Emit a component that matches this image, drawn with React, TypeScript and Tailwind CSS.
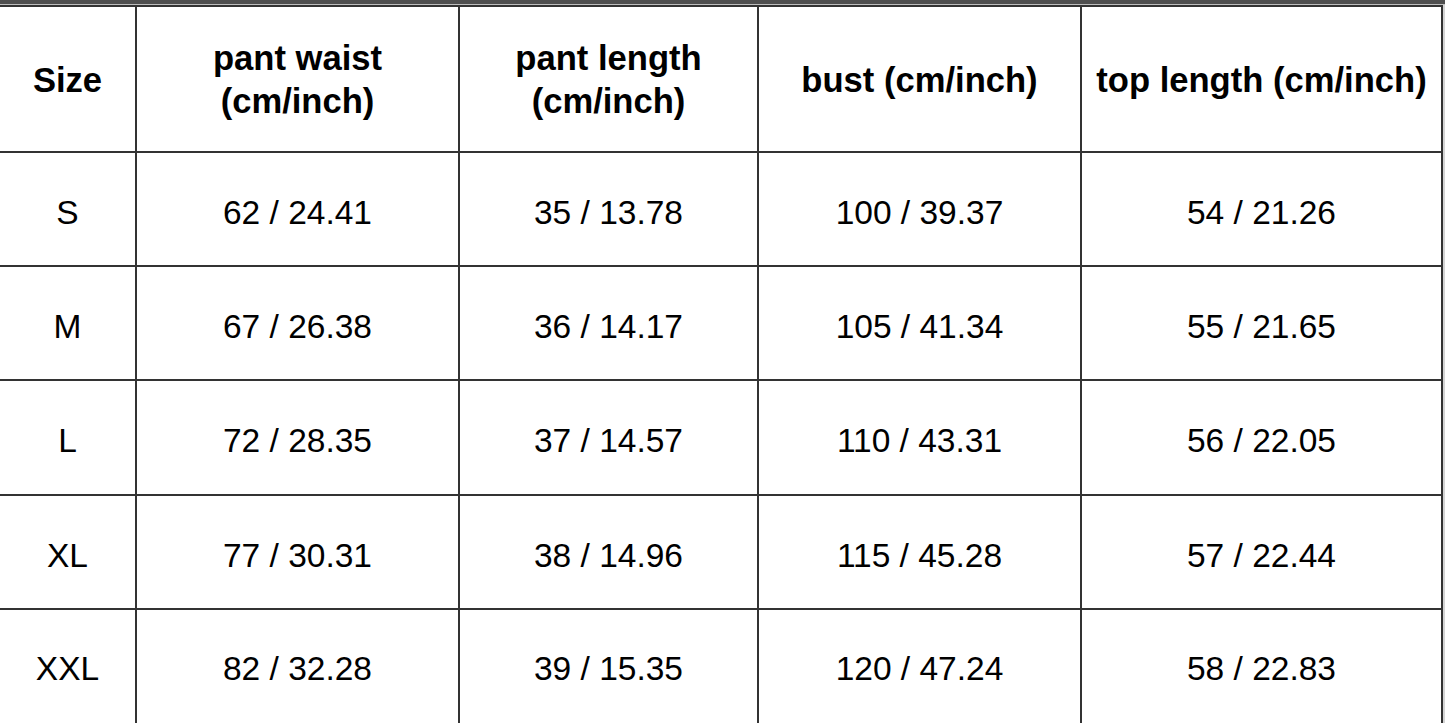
const headers = [
  ['Size'],
  ['pant waist', '(cm/inch)'],
  ['pant length', '(cm/inch)'],
  ['bust (cm/inch)'],
  ['top length (cm/inch)'],
]

const rows = [
  ['S', '62 / 24.41', '35 / 13.78', '100 / 39.37', '54 / 21.26'],
  ['M', '67 / 26.38', '36 / 14.17', '105 / 41.34', '55 / 21.65'],
  ['L', '72 / 28.35', '37 / 14.57', '110 / 43.31', '56 / 22.05'],
  ['XL', '77 / 30.31', '38 / 14.96', '115 / 45.28', '57 / 22.44'],
  ['XXL', '82 / 32.28', '39 / 15.35', '120 / 47.24', '58 / 22.83'],
]

export default function App() {
  return (
    <div
      className="w-[1445px] h-[723px] overflow-hidden bg-[#d4d4d4] text-black"
      style={{ fontFamily: '"Liberation Sans", Arial, sans-serif' }}
    >
      {/* strip of the window above the chart */}
      <div className="h-[4px] bg-[#4e4e4e]" />
      <div className="h-[1px] bg-[#bdbdbd]" />

      <div className="w-[1443px] bg-[#333333] pt-[2px] pr-[2px]">
        <div className="grid grid-cols-[135px_321px_297px_321px_359px] grid-rows-[144px_112px_112px_113px_112px_120px] gap-[2px]">
          {headers.map((lines, i) => (
            <div
              key={i}
              className="bg-white flex flex-col items-center justify-center pt-[2px] text-[34.6px] font-bold leading-[43px] text-center"
            >
              {lines.map(l => <span key={l} className="whitespace-nowrap">{l}</span>)}
            </div>
          ))}
          {rows.map(r =>
            r.map((v, j) => (
              <div
                key={r[0] + j}
                className={`bg-white flex items-center justify-center text-[33.5px] leading-none ${r[0] === 'XXL' ? 'pb-[2px]' : 'pt-[7px]'}`}
              >
                {v}
              </div>
            )),
          )}
        </div>
      </div>
    </div>
  )
}
